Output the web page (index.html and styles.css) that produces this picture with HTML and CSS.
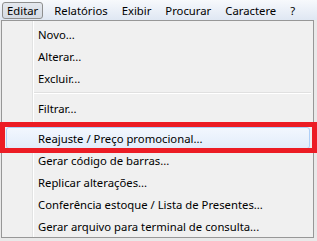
FILE: index.html
```html
<!DOCTYPE html>
<html lang="pt">
<head>
    <meta charset="UTF-8">
    <title>Editar</title>
    <link rel="stylesheet" href="styles.css">
</head>
<body>
    <div class="window">
        <div class="menubar">
            <span class="menu-item open">Editar</span>
            <span class="menu-item">Relatórios</span>
            <span class="menu-item">Exibir</span>
            <span class="menu-item">Procurar</span>
            <span class="menu-item">Caractere</span>
            <span class="menu-item">?</span>
        </div>

        <div class="dropdown">
            <div class="row">Novo...</div>
            <div class="row">Alterar...</div>
            <div class="row">Excluir...</div>
            <div class="separator"></div>
            <div class="row">Filtrar...</div>
            <div class="separator"></div>
            <div class="row hover">Reajuste / Preço promocional...</div>
            <div class="row">Gerar código de barras...</div>
            <div class="row">Replicar alterações...</div>
            <div class="row">Conferência estoque / Lista de Presentes...</div>
            <div class="row">Gerar arquivo para terminal de consulta...</div>
        </div>

        <div class="mark"></div>
    </div>
</body>
</html>
```

FILE: styles.css
```css
* {
    box-sizing: border-box;
    margin: 0;
    padding: 0;
}

body {
    background-color: #e9e9e9;
    font-family: "Noto Sans", "Open Sans", sans-serif;
    font-size: 11.3px;
    color: #000;
}

.window {
    position: relative;
    width: 317px;
    height: 241px;
    overflow: hidden;
}

.menubar {
    height: 20px;
    display: flex;
    align-items: center;
    padding-left: 2px;
    background: linear-gradient(#f7f9fc, #dfe7f3);
}

.menu-item {
    height: 17px;
    line-height: 16px;
    padding: 0 6px;
    border: 1px solid transparent;
    white-space: nowrap;
}

.menu-item.open {
    border-color: #8e8f8f;
    border-radius: 3px;
    background: linear-gradient(#e4e8ee, #d5dbe4);
    padding: 0 4px;
    margin-right: 4px;
}

.dropdown {
    margin-left: 1px;
    width: 313px;
    border: 1px solid #979797;
    padding: 2px 2px 0 2px;
    background-color: #f0f0f0;
    background-image: linear-gradient(90deg, transparent 30px, #e2e3e3 30px, #e2e3e3 31px, #ffffff 31px, #ffffff 32px, transparent 32px);
}

.row {
    height: 22px;
    line-height: 21px;
    padding-top: 1px;
    padding-left: 34px;
    white-space: nowrap;
}

.row.hover {
    border: 1px solid #aecff7;
    border-radius: 3px;
    line-height: 19px;
    padding-left: 31px;
    margin: 0 1px 0 2px;
    background: linear-gradient(#f2f7fe, #e2ecfa);
}

.separator {
    height: 8px;
    margin-left: 30px;
    background: linear-gradient(transparent 3px, #e0e0e0 3px, #e0e0e0 4px, #ffffff 4px, #ffffff 5px, transparent 5px);
}

.mark {
    position: absolute;
    left: 0;
    top: 122px;
    width: 317px;
    height: 31px;
    border: 5px solid #ec1c24;
}
```
